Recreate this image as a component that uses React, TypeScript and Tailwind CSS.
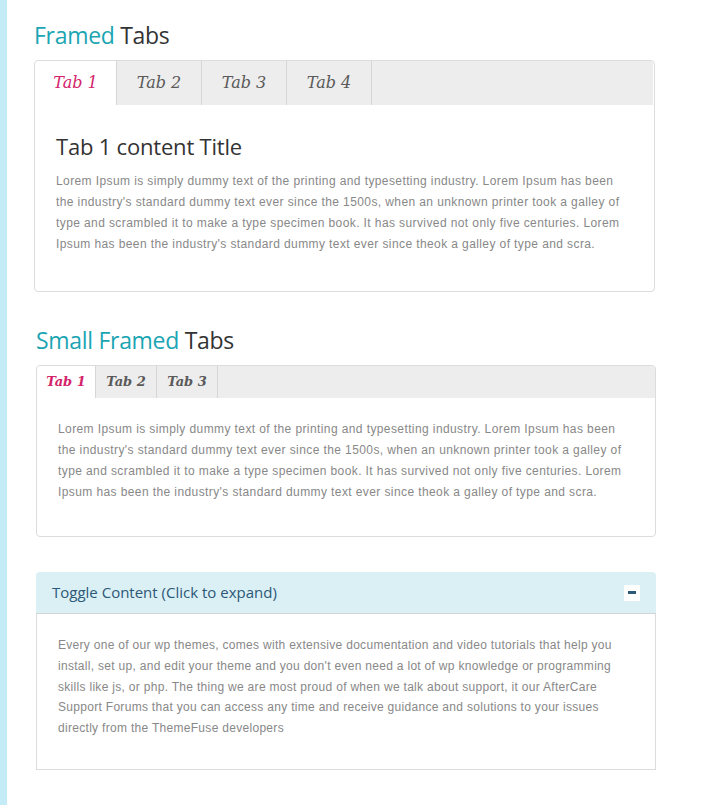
import { useState } from "react";

const LOREM =
  "Lorem Ipsum is simply dummy text of the printing and typesetting industry. Lorem Ipsum has been the industry's standard dummy text ever since the 1500s, when an unknown printer took a galley of type and scrambled it to make a type specimen book. It has survived not only five centuries. Lorem Ipsum has been the industry's standard dummy text ever since theok a galley of type and scra.";

const SUPPORT =
  "Every one of our wp themes, comes with extensive documentation and video tutorials that help you install, set up, and edit your theme and you don't even need a lot of wp knowledge or programming skills like js, or php. The thing we are most proud of when we talk about support, it our AfterCare Support Forums that you can access any time and receive guidance and solutions to your issues directly from the ThemeFuse developers";

const HEAD = { fontFamily: '"Open Sans", "Noto Sans", sans-serif' };
const BODY = { fontFamily: '"Liberation Sans", Arial, sans-serif' };
const SERIF = { fontFamily: '"DejaVu Serif", "Liberation Serif", Georgia, serif' };

function Heading({ lead, rest }: { lead: string; rest: string }) {
  return (
    <h2 className="text-[23px] leading-[30px] tracking-[-0.3px]" style={HEAD}>
      <span className="text-[#1ba5b3]">{lead}</span> <span className="text-[#333]">{rest}</span>
    </h2>
  );
}

export default function App() {
  const [big, setBig] = useState(0);
  const [small, setSmall] = useState(0);
  const [open, setOpen] = useState(true);

  const bigTabs = [
    { label: "Tab 1", w: "w-[82px]" },
    { label: "Tab 2", w: "w-[85px]" },
    { label: "Tab 3", w: "w-[85px]" },
    { label: "Tab 4", w: "w-[85px]" },
  ];
  const smallTabs = [
    { label: "Tab 1", w: "w-[59px]" },
    { label: "Tab 2", w: "w-[61px]" },
    { label: "Tab 3", w: "w-[61px]" },
  ];

  return (
    <div className="flex min-h-[805px] bg-white">
      <div className="w-[7px] shrink-0 bg-[#c3ecf7]" />
      <div className="ml-[27px] w-[622px] pt-[20px]">
        {/* Framed tabs */}
        <Heading lead="Framed" rest="Tabs" />
        <div className="mt-[10px] w-[621px] rounded-[4px] border border-[#dcdcdc] bg-white">
          <div className="mr-[1px] flex h-[44px] rounded-tl-[4px] bg-[#ededed]">
            {bigTabs.map((t, i) => (
              <button
                key={t.label}
                onClick={() => setBig(i)}
                className={`${t.w} flex items-center justify-center border-r border-[#d6d6d6] text-[16px] italic ${
                  big === i ? "bg-white text-[#d3246b]" : "text-[#5a5a5a]"
                } ${i === 0 ? "rounded-tl-[4px]" : ""}`}
                style={SERIF}
              >
                {t.label}
              </button>
            ))}
          </div>
          <div className="px-[21px] pt-[27px] pb-[36px]">
            <h3 className="text-[22px] leading-[28px] text-[#333] tracking-[-0.2px]" style={HEAD}>
              Tab {big + 1} content Title
            </h3>
            <p className="mt-[11px] text-[12px] leading-[21px] tracking-[0.4px] text-[#888]" style={BODY}>
              {LOREM}
            </p>
          </div>
        </div>

        {/* Small framed tabs */}
        <div className="ml-[2px]">
          <div className="mt-[33px]">
            <Heading lead="Small Framed" rest="Tabs" />
          </div>
          <div className="mt-[10px] w-[620px] rounded-[4px] border border-[#dcdcdc] bg-white">
            <div className="flex h-[32px] rounded-t-[4px] bg-[#ededed]">
              {smallTabs.map((t, i) => (
                <button
                  key={t.label}
                  onClick={() => setSmall(i)}
                  className={`${t.w} flex items-center justify-center border-r border-[#d6d6d6] text-[13px] font-bold italic ${
                    small === i ? "bg-white text-[#d3246b]" : "text-[#5a5a5a]"
                  } ${i === 0 ? "rounded-tl-[4px]" : ""}`}
                  style={SERIF}
                >
                  {t.label}
                </button>
              ))}
            </div>
            <div className="px-[21px] pt-[21px] pb-[33px]">
              <p className="text-[12px] leading-[21px] tracking-[0.4px] text-[#888]" style={BODY}>
                {LOREM}
              </p>
            </div>
          </div>

          {/* Toggle */}
          <div className="mt-[35px] w-[620px]">
            <button
              onClick={() => setOpen(!open)}
              className="flex h-[42px] w-full items-center justify-between rounded-t-[4px] border-b border-[#d4d4d4] bg-[#dbf0f5] pl-[16px] pr-[16px] text-left"
            >
              <span className="text-[15px] text-[#2c5877]" style={HEAD}>
                Toggle Content (Click to expand)
              </span>
              <span className="flex h-[16px] w-[16px] items-center justify-center bg-white">
                <span className="h-[3px] w-[8px] bg-[#2f5a77]" />
              </span>
            </button>
            {open && (
              <div className="border-x border-b border-[#dcdcdc] px-[21px] pt-[21px] pb-[30px]">
                <p className="text-[12px] leading-[20.8px] tracking-[0.3px] text-[#888]" style={BODY}>
                  {SUPPORT}
                </p>
              </div>
            )}
          </div>
        </div>
      </div>
    </div>
  );
}
